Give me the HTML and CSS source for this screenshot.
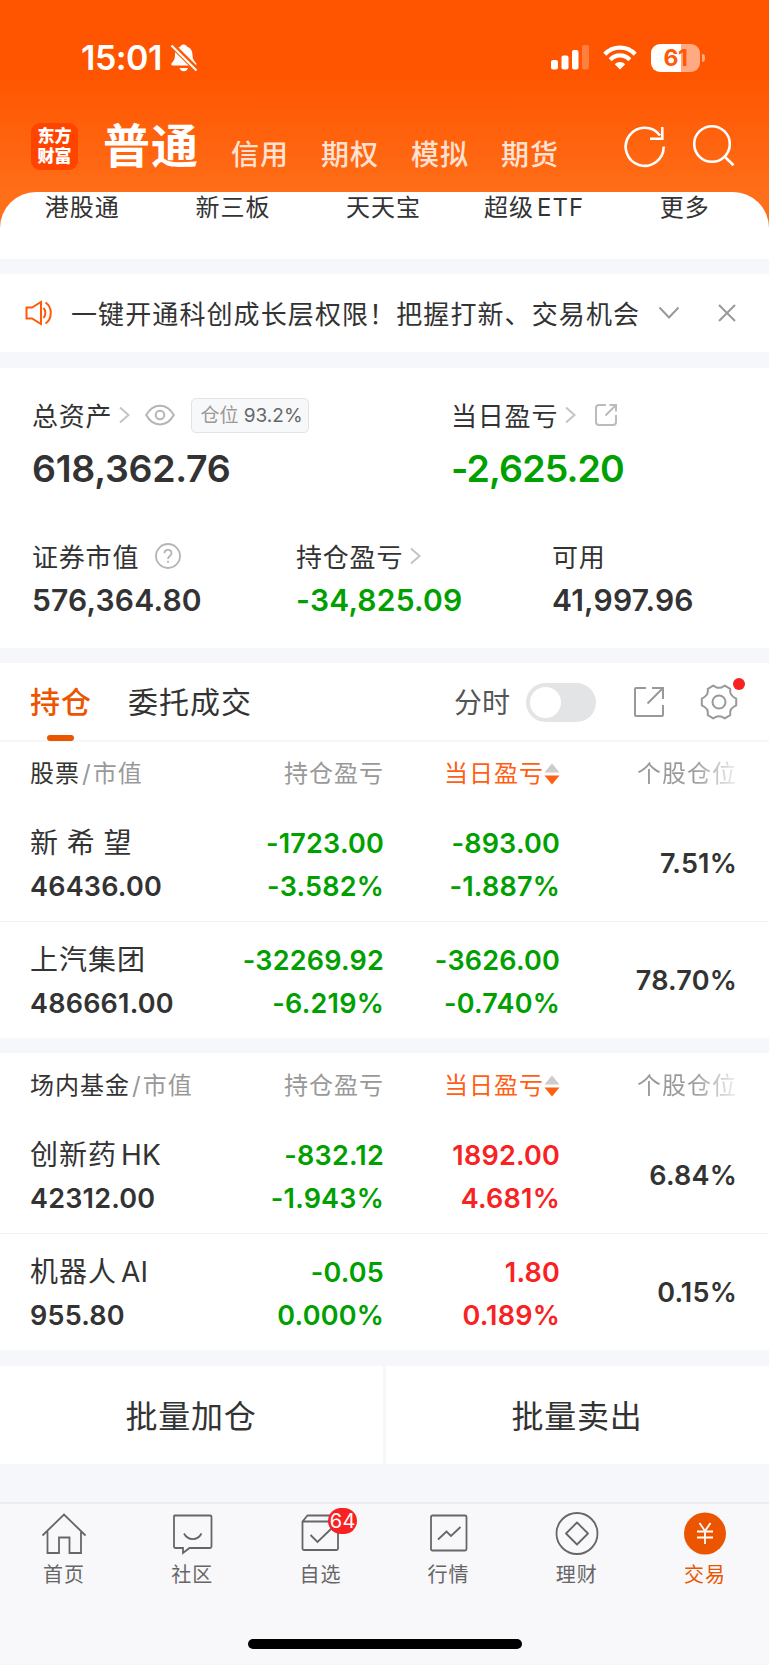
FILE: index.html
```html
<!DOCTYPE html>
<html lang="zh-CN">
<head>
    <meta charset="utf-8">
    <title>交易</title>
    <link rel="stylesheet" href="styles.css">
</head>
<body>
    <header class="top">
        <div class="status">
            <span class="time">15:01</span>
            <svg class="bell" width="28" height="30" viewBox="0 0 28 30">
                <path d="M13.500 1.500c-1.800 0-3 1-3.300 2.300C6.500 5 5 8 5 12c0 4-1.200 6-3.300 8-.9 1-.5 2.400.9 2.400h22.500c1.300 0 1.800-1.400.9-2.400C24 18 22.500 16 22.500 12c0-4-1.700-7-5.400-8.200C16.700 2.500 15.400 1.500 13.500 1.500z" fill="#fff"/>
                <path d="M9.500 25h8.500c-.6 2-2.200 3.300-4.200 3.300S10.100 27 9.500 25z" fill="#fff"/>
                <path d="M1.500 1.500 27 27" stroke="#ff5700" stroke-width="5.500"/>
                <path d="M1.500 2.500 26.500 27.500" stroke="#fff" stroke-width="2.200"/>
            </svg>
            <svg class="signal" width="38" height="25" viewBox="0 0 38 25" fill="#fff">
                <rect x="0" y="15" width="7" height="9.500" rx="2"/>
                <rect x="10.500" y="10.500" width="7" height="14" rx="2"/>
                <rect x="21" y="5" width="6.500" height="19.500" rx="2"/>
                <rect x="31" y="0" width="7" height="24.500" rx="2" opacity=".25"/>
            </svg>
            <svg class="wifi" width="34" height="25" viewBox="0 0 34 25" fill="none" stroke="#fff" stroke-width="4.200">
                <path d="M1.800 9.200C10 .4 24 .4 32.200 9.200"/>
                <path d="M7.200 14.700c5.500-5.700 14.100-5.700 19.600 0"/>
                <path d="M17 24.500l-5.200-5.300c3-2.900 7.400-2.900 10.400 0z" fill="#fff" stroke="none"/>
            </svg>
            <div class="battery">61</div>
        </div>
        <nav class="accounts">
            <div class="logo">东方<br>财富</div>
            <span class="current">普通</span>
            <span>信用</span>
            <span>期权</span>
            <span>模拟</span>
            <span>期货</span>
            <svg class="refresh" width="44" height="44" viewBox="0 0 44 44" fill="none" stroke="#fff" stroke-width="2.600">
                <path d="M40.700 22.500A19 19 0 1 1 37 11.500M39.300 3v11.800H27"/>
            </svg>
            <svg class="search" width="44" height="44" viewBox="0 0 44 44" fill="none" stroke="#fff" stroke-width="2.600">
                <circle cx="20" cy="20" r="17.800"/>
                <path d="M32.500 32.500 41.500 41.200"/>
            </svg>
        </nav>
    </header>

    <section class="menu">
        <span>港股通</span>
        <span>新三板</span>
        <span>天天宝</span>
        <span>超级<i>ETF</i></span>
        <span>更多</span>
    </section>

    <section class="notice">
        <svg width="28" height="26" viewBox="0 0 28 26" fill="none" stroke="#ff5a0a" stroke-width="2">
            <path d="M1.500 7.500H7L16 2v22L7 18.500H1.500z"/>
            <path d="M18.500 8c2.500 2.500 2.500 7.500 0 10M20.500 2.500c7 4.500 7 16.500 0 21"/>
        </svg>
        <p>一键开通科创成长层权限！把握打新、交易机会</p>
        <svg class="down" width="22" height="14" viewBox="0 0 22 14" fill="none" stroke="#999" stroke-width="2">
            <path d="M1.500 1.500 11 11.500 20.500 1.500"/>
        </svg>
        <svg class="close" width="18" height="18" viewBox="0 0 18 18" fill="none" stroke="#999" stroke-width="2">
            <path d="M1 1 17 17M17 1 1 17"/>
        </svg>
    </section>

    <section class="assets">
        <div class="asset-row main">
            <div class="asset">
                <div class="label"><span>总资产</span>
                    <svg class="arrow" width="11" height="18" viewBox="0 0 11 18"><path d="M1 1.500 9.500 9 1 16.500"/></svg>
                    <svg class="eye" width="30" height="22" viewBox="0 0 30 22" fill="none" stroke="#b5b5b5" stroke-width="2">
                        <path d="M1.200 11C8-1.500 22-1.500 28.800 11 22 23.500 8 23.500 1.200 11z"/>
                        <circle cx="15" cy="11" r="4.300"/>
                    </svg>
                    <div class="ratio">仓位 <b>93.2%</b></div>
                </div>
                <div class="value">618,362.76</div>
            </div>
            <div class="asset">
                <div class="label"><span>当日盈亏</span>
                    <svg class="arrow" width="11" height="18" viewBox="0 0 11 18"><path d="M1 1.500 9.500 9 1 16.500"/></svg>
                    <svg class="share" width="22" height="22" viewBox="0 0 22 22" fill="none" stroke="#bbb" stroke-width="2">
                        <path d="M11 1H4a3 3 0 0 0-3 3v14a3 3 0 0 0 3 3h14a3 3 0 0 0 3-3v-7M10.500 11.500 20.500 1.500M14.500 1H21v6.500"/>
                    </svg>
                </div>
                <div class="value down-text">-2,625.20</div>
            </div>
        </div>
        <div class="asset-row sub">
            <div class="asset">
                <div class="label"><span>证券市值</span>
                    <svg class="help" width="26" height="26" viewBox="0 0 26 26" fill="none" stroke="#b5b5b5" stroke-width="1.800">
                        <circle cx="13" cy="13" r="12"/>
                        <path d="M9.500 10.300c0-4.600 7-4.600 7 0 0 2.700-3.500 2.700-3.500 5.700M13 17.800v2"/>
                    </svg>
                </div>
                <div class="value">576,364.80</div>
            </div>
            <div class="asset">
                <div class="label"><span>持仓盈亏</span>
                    <svg class="arrow" width="11" height="18" viewBox="0 0 11 18"><path d="M1 1.500 9.500 9 1 16.500"/></svg>
                </div>
                <div class="value down-text">-34,825.09</div>
            </div>
            <div class="asset">
                <div class="label"><span>可用</span></div>
                <div class="value">41,997.96</div>
            </div>
        </div>
    </section>

    <section class="holdings">
        <div class="tabs">
            <span class="tab active">持仓</span>
            <span class="tab">委托成交</span>
            <span class="switch-label">分时</span>
            <span class="switch"></span>
            <svg class="export" width="32" height="32" viewBox="0 0 32 32" fill="none" stroke="#999" stroke-width="2">
                <path d="M13 2H3a1 1 0 0 0-1 1v26a1 1 0 0 0 1 1h26a1 1 0 0 0 1-1V19M14.500 17.500 29.500 2.500M19 2h11v11"/>
            </svg>
            <span class="settings">
                <svg width="38" height="38" viewBox="0 0 38 38" fill="none" stroke="#999" stroke-width="2">
                    <path d="M13.200 2.600 16 4.200Q19 5.400 22 4.200L24.800 2.600 30.200 5.800V9.200Q30.600 12.400 33.400 14L36.200 15.600V22.400L33.400 24Q30.600 25.600 30.200 28.800V32.200L24.800 35.400 22 33.800Q19 32.600 16 33.800L13.200 35.400 7.800 32.200V28.800Q7.400 25.600 4.600 24L1.800 22.400V15.600L4.600 14Q7.400 12.400 7.800 9.200V5.800z" stroke-linejoin="round"/>
                    <circle cx="19" cy="19" r="6.500"/>
                </svg>
            </span>
        </div>

        <div class="row head">
            <span class="name">股票<em><i>/</i>市值</em></span>
            <span>持仓盈亏</span>
            <span class="sort">当日盈亏<svg width="16" height="22" viewBox="0 0 16 22"><path d="M8 .5 15.500 9.500H.5z" fill="#ccc"/><path d="M8 21.500 15.500 12.500H.5z" fill="#ff5f15"/></svg></span>
            <span class="fade">个股仓位</span>
        </div>
        <div class="row">
            <div class="name"><span class="wide">新希望</span><b>46436.00</b></div>
            <div class="down-text"><b>-1723.00</b><b>-3.582%</b></div>
            <div class="down-text"><b>-893.00</b><b>-1.887%</b></div>
            <div class="share-of"><b>7.51%</b></div>
        </div>
        <div class="row">
            <div class="name"><span>上汽集团</span><b>486661.00</b></div>
            <div class="down-text"><b>-32269.92</b><b>-6.219%</b></div>
            <div class="down-text"><b>-3626.00</b><b>-0.740%</b></div>
            <div class="share-of"><b>78.70%</b></div>
        </div>
    </section>

    <section class="holdings">
        <div class="row head">
            <span class="name">场内基金<em><i>/</i>市值</em></span>
            <span>持仓盈亏</span>
            <span class="sort">当日盈亏<svg width="16" height="22" viewBox="0 0 16 22"><path d="M8 .5 15.500 9.500H.5z" fill="#ccc"/><path d="M8 21.500 15.500 12.500H.5z" fill="#ff5f15"/></svg></span>
            <span class="fade">个股仓位</span>
        </div>
        <div class="row">
            <div class="name"><span>创新药<i>HK</i></span><b>42312.00</b></div>
            <div class="down-text"><b>-832.12</b><b>-1.943%</b></div>
            <div class="up-text"><b>1892.00</b><b>4.681%</b></div>
            <div class="share-of"><b>6.84%</b></div>
        </div>
        <div class="row">
            <div class="name"><span>机器人<i>AI</i></span><b>955.80</b></div>
            <div class="down-text"><b>-0.05</b><b>0.000%</b></div>
            <div class="up-text"><b>1.80</b><b>0.189%</b></div>
            <div class="share-of"><b>0.15%</b></div>
        </div>
    </section>

    <section class="bulk">
        <button>批量加仓</button>
        <button>批量卖出</button>
    </section>

    <footer class="tabbar">
        <div class="items">
            <a>
                <svg width="46" height="44" viewBox="0 0 46 44"><path d="M1.500 23.500 23 2.500 44.500 23.500M6.500 19.500V41H18V25.500H28.500V41H40V19.500"/></svg>
                首页
            </a>
            <a>
                <svg width="46" height="44" viewBox="0 0 46 44"><path d="M5.500 3.500H41a1.500 1.500 0 0 1 1.500 1.500V34.500a1.500 1.500 0 0 1-1.500 1.500H20.500L14 41V36H6.500A1.500 1.500 0 0 1 5 34.500V4zM15 21.500c4 7.500 13.500 7.500 17.500 0"/></svg>
                社区
            </a>
            <a>
                <svg width="46" height="44" viewBox="0 0 46 44"><path d="M5.500 9.500 10.500 3.500H37L41 9.500V36.500a1.500 1.500 0 0 1-1.500 1.500H7A1.500 1.500 0 0 1 5.500 36.500zM5.500 9.500H41M13.500 23 20.500 30 34.500 16.500"/></svg>
                自选
                <span class="badge">64</span>
            </a>
            <a>
                <svg width="46" height="44" viewBox="0 0 46 44"><rect x="5" y="3.500" width="35.500" height="35" rx="1.500"/><path d="M12 27.500 20.500 19.500 25 24 34.500 15"/></svg>
                行情
            </a>
            <a>
                <svg width="46" height="44" viewBox="0 0 46 44"><circle cx="23" cy="21.500" r="20.500"/><path d="M23 10.500 34 21.500 23 32.500 12 21.500z" stroke-linejoin="round"/></svg>
                理财
            </a>
            <a class="on">
                <svg width="46" height="44" viewBox="0 0 46 44"><circle cx="23" cy="21.500" r="21" fill="#eb5500" stroke="none"/><path d="M17.500 11 23 19 28.500 11M23 19V32M15 19.500H31M15 25.500H31" stroke="#fff"/></svg>
                交易
            </a>
        </div>
        <div class="home-bar"></div>
    </footer>
</body>
</html>
```
FILE: styles.css
```css
* {
    box-sizing: border-box;
}

body {
    margin: 0;
    width: 769px;
    height: 1665px;
    overflow: hidden;
    display: flex;
    flex-direction: column;
    background: linear-gradient(#ff5500 75px, #ff6f1a 200px, #ff6f1a 240px, #f6f7fa 240px);
    font-family: Inter, "Noto Sans CJK SC", sans-serif;
    color: #333;
}

svg {
    flex: none;
}

i, em {
    font-style: normal;
}

p {
    margin: 0;
}

/* header */
.top {
    height: 192px;
    color: #fff;
}

.status {
    display: flex;
    align-items: center;
    height: 115px;
    padding-left: 81px;
}

.time {
    width: 89px;
    font-size: 34px;
    font-weight: 600;
    letter-spacing: -0.5px;
}

.signal {
    margin-left: 353px;
}

.wifi {
    margin-left: 14px;
}

.battery {
    position: relative;
    width: 49px;
    height: 28px;
    margin-left: 14px;
    border-radius: 9px;
    background: linear-gradient(90deg, #fff 62%, #ffaa80 62%);
    color: #ff5a08;
    font-size: 23px;
    font-weight: 700;
    letter-spacing: -0.5px;
    line-height: 28px;
    text-align: center;
}

.battery::after {
    content: "";
    position: absolute;
    right: -5px;
    top: 10px;
    width: 3px;
    height: 8px;
    border-radius: 0 3px 3px 0;
    background: #ffaa80;
}

.accounts {
    display: flex;
    height: 77px;
    padding-left: 31px;
    font-size: 28px;
    font-weight: 500;
    letter-spacing: 1px;
    line-height: 80px;
}

.accounts span {
    width: 90px;
    color: #ffe2d3;
}

.accounts .current {
    width: 128px;
    margin-left: 25px;
    color: #fff;
    font-size: 47px;
    font-weight: 700;
    line-height: 61px;
}

.logo {
    width: 47px;
    height: 47px;
    margin-top: 8px;
    padding-top: 3px;
    border-radius: 9px;
    background: #ff4400;
    font-size: 17px;
    font-weight: 900;
    letter-spacing: 0;
    line-height: 20px;
    text-align: center;
}

.refresh {
    margin: 9px 0 0 32px;
}

.search {
    margin: 9px 0 0 25px;
}

/* shortcuts */
.menu {
    display: flex;
    height: 67px;
    padding: 0 9px 0 7px;
    border-radius: 36px 36px 0 0;
    background: #fff;
    font-size: 24px;
    letter-spacing: 1px;
    line-height: 31px;
}

.menu span {
    flex: 1;
    text-align: center;
}

.menu i {
    margin-left: 3px;
}

/* notice */
.notice {
    display: flex;
    align-items: center;
    height: 78px;
    margin-top: 15px;
    padding-left: 25px;
    background: #fff;
    font-size: 26px;
    letter-spacing: 1.1px;
}

.notice p {
    width: 586px;
    padding: 0 0 2px 18px;
    white-space: nowrap;
}

.close {
    margin-left: 38px;
}

.down {
    margin-left: 19px;
}

/* assets */
.assets {
    height: 280px;
    margin-top: 16px;
    padding: 27px 0 0 32px;
    background: #fff;
}

.asset-row {
    display: grid;
}

.main {
    grid-template-columns: 419px 1fr;
    height: 141px;
}

.sub {
    grid-template-columns: 264px 256px 1fr;
}

.label {
    display: flex;
    align-items: center;
    height: 40px;
    font-size: 26px;
    letter-spacing: 0.8px;
}

.label span {
    padding-bottom: 2px;
}

.arrow {
    margin-left: 7px;
    fill: none;
    stroke: #c4c4c4;
    stroke-width: 2;
}

.eye {
    margin-left: 15px;
}

.ratio {
    height: 35px;
    margin-left: 16px;
    padding: 0 5px 0 8px;
    border: 1px solid #e2e3e5;
    border-radius: 5px;
    background: #f7f8fa;
    color: #999;
    font-size: 19px;
    line-height: 33px;
    letter-spacing: 0;
}

.ratio b {
    color: #666;
    font-weight: 400;
}

.share {
    margin-left: 19px;
}

.help {
    margin-left: 16px;
}

.value {
    font-weight: 600;
}

.main .value {
    font-size: 37.5px;
    letter-spacing: -0.3px;
    line-height: 68px;
}

.main .down-text {
    letter-spacing: -0.9px;
}

.sub .value {
    font-size: 30px;
    letter-spacing: 0.2px;
    line-height: 48px;
}

.down-text {
    color: #00a000;
}

.up-text {
    color: #f82222;
}

/* holdings */
.holdings {
    margin-top: 15px;
    background: #fff;
}

.tabs {
    display: flex;
    align-items: center;
    height: 79px;
    padding: 1px 0 0 30px;
    border-bottom: 2px solid #f5f6f8;
    line-height: 76px;
}

.tab {
    position: relative;
    margin-right: 36px;
    font-size: 30px;
    letter-spacing: 1px;
}

.active {
    color: #eb5500;
    font-weight: 500;
}

.active::after {
    content: "";
    position: absolute;
    left: 17px;
    bottom: -1px;
    width: 27px;
    height: 6px;
    border-radius: 3px;
    background: #eb5500;
}

.switch-label {
    margin-left: auto;
    padding-top: 1px;
    color: #555;
    font-size: 28px;
}

.switch {
    width: 70px;
    height: 39px;
    margin-left: 16px;
    padding: 4px;
    border-radius: 20px;
    background: #e3e4e6;
}

.switch::before {
    content: "";
    display: block;
    width: 31px;
    height: 31px;
    border-radius: 50%;
    background: #fff;
}

.export {
    margin-left: 37px;
}

.settings {
    position: relative;
    display: flex;
    margin: 0 31px 0 35px;
}

.settings::after {
    content: "";
    position: absolute;
    right: -7px;
    top: -5px;
    width: 12px;
    height: 12px;
    border-radius: 50%;
    background: #f82222;
}

.row {
    display: grid;
    grid-template-columns: 170px 184px 176px 177px;
    height: 117px;
    padding: 18px 0 0 30px;
    font-size: 28px;
    line-height: 43px;
    text-align: right;
}

.row + .row:not(.head) {
    padding-top: 17px;
    border-top: 1px solid #f2f3f5;
}

.head + .row:not(.head) {
    padding-top: 18px;
    border-top: none;
}

.row .name {
    text-align: left;
    white-space: nowrap;
}

.row .name span {
    letter-spacing: 1px;
}

.row .name i {
    margin-left: 4px;
    letter-spacing: 0.2px;
}

.row .name .wide {
    letter-spacing: 8.7px;
}

.row b, .row .name span {
    display: block;
}

.row b {
    font-size: 27px;
    font-weight: 600;
    letter-spacing: 0.2px;
}

.share-of {
    padding-top: 20px;
}

.row.head {
    height: 63px;
    padding-top: 0;
    color: #999;
    font-size: 24px;
    letter-spacing: 1px;
    line-height: 65px;
}

.head .name {
    color: #333;
}

.head em {
    color: #999;
}

.row.head i {
    margin: 0 2px;
}

.tabs + .row.head {
    height: 62px;
    line-height: 63px;
}

.sort {
    color: #ff5f15;
    white-space: nowrap;
}

.sort svg {
    vertical-align: -3px;
}

.fade {
    background: linear-gradient(90deg, #999 75%, #eee);
    background-clip: text;
    -webkit-background-clip: text;
    color: transparent;
}

/* bulk actions */
.bulk {
    display: flex;
    gap: 3px;
    height: 98px;
    margin-top: 16px;
}

.bulk button {
    flex: 1;
    padding: 0 1px 3px 0;
    border: none;
    background: #fff;
    color: #333;
    font: inherit;
    font-size: 32px;
    letter-spacing: 0.7px;
}

/* bottom bar */
.tabbar {
    height: 162px;
    margin-top: 38px;
    border-top: 2px solid #ebecee;
    background: #f8f8fb;
}

.items {
    display: flex;
    height: 135px;
    padding-top: 8px;
}

.items a {
    position: relative;
    flex: 1;
    display: flex;
    flex-direction: column;
    align-items: center;
    color: #666;
    font-size: 20px;
    letter-spacing: 1px;
    line-height: 37px;
}

.items svg {
    margin-bottom: 1px;
    fill: none;
    stroke: #666;
    stroke-width: 1.8;
}

.items .on {
    color: #eb5500;
}

.badge {
    position: absolute;
    left: 72px;
    top: -4px;
    width: 29px;
    height: 26px;
    border-radius: 13px;
    background: #f82222;
    color: #fff;
    line-height: 26px;
    text-align: center;
    letter-spacing: 0.5px;
}

.home-bar {
    width: 274px;
    height: 10px;
    margin: 0 auto;
    border-radius: 5px;
    background: #000;
}
```
